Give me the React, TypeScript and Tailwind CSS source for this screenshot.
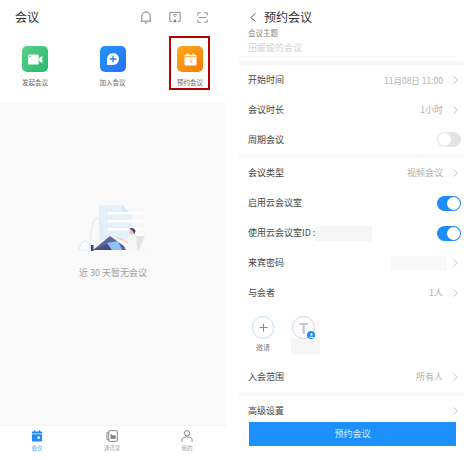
import React from "react";

const font = { fontFamily: '"Noto Sans CJK SC", "Liberation Sans", sans-serif' };

function Chevron() {
  return (
    <svg width="5" height="8" viewBox="0 0 5 8" fill="none" stroke="#b5b5b5" strokeWidth="0.8" className="shrink-0 mr-[3px]">
      <path d="M0.5 0.5 L4.4 4 L0.5 7.5" />
    </svg>
  );
}

function Toggle({ on }: { on: boolean }) {
  return (
    <div className={`w-[24px] h-[15px] rounded-full relative shrink-0 ${on ? "bg-[#1e8cfa]" : "bg-[#e4e4e4]"}`}>
      <div className={`absolute top-[1px] w-[13px] h-[13px] rounded-full bg-white ${on ? "right-[1px]" : "left-[1px]"}`} />
    </div>
  );
}

function Row({ label, h, children }: { label: React.ReactNode; h: string; children?: React.ReactNode }) {
  return (
    <div className={`flex items-center justify-between pl-[9px] pr-[3px] text-[9px] text-[#444] ${h}`}>
      <span className="flex items-center">{label}</span>
      <div className="flex items-center gap-[10px] text-[#b0b0b0]">{children}</div>
    </div>
  );
}

function Band({ h }: { h: string }) {
  return <div className={`bg-[#f8f8f8] ${h}`} />;
}

function Illustration() {
  return (
    <svg width="70" height="52" viewBox="78 203 70 52">
      <path d="M99 205 H122 L132 215 V240 H99 Z" fill="#e4f1fc" />
      <path d="M122 205 L132 215 H122 Z" fill="#d3e8f9" />
      <rect x="108" y="212" width="33" height="2.5" fill="#fff" />
      <rect x="108" y="220" width="33" height="2.5" fill="#fff" />
      <rect x="108" y="228" width="33" height="2.5" fill="#fff" />
      <path d="M79 250 C81 238 88 238 91 250" fill="none" stroke="#cfe3f6" strokeWidth="0.8" />
      <path d="M90 249 C91 222 95 216 98 218 C101 220 102 230 103 240" fill="none" stroke="#cfe3f6" strokeWidth="0.8" />
      <path d="M135 236 H145 L138 252 Z" fill="#e3e3e3" />
      <path d="M79 250 H146" stroke="#f0f0f0" strokeWidth="0.8" />
      <path d="M124 243 L131 234 L137 238 L135 250 H125 Z" fill="#f6f6f6" />
      <path d="M93 250 L110 236 L124 246 L126 250 Z" fill="#5d6699" />
      <path d="M93 250 L108 244 L122 250 Z" fill="#474f86" />
      <path d="M107 243 L118 241 L122 250 L112 250 Z" fill="#8cc3f4" />
      <path d="M117 237 L128 243" stroke="#f3c9b4" strokeWidth="1.2" />
      <circle cx="132" cy="232" r="2.6" fill="#f1c0a8" />
      <path d="M129 229 C131 227 135 228 135.5 231 L134.5 234 L132 230 Z" fill="#3b4679" />
      <rect x="91" y="245" width="2.5" height="6" fill="#3b4679" />
    </svg>
  );
}

function AppIcon({ from, to, label, children }: { from: string; to: string; label: string; children: React.ReactNode }) {
  return (
    <div className="flex flex-col items-center w-[36px]">
      <div className={`w-[26px] h-[26px] rounded-[5px] bg-gradient-to-br ${from} ${to} flex items-center justify-center`}>{children}</div>
      <span className="mt-[5px] text-[6.5px] leading-[10px] text-[#666] whitespace-nowrap">{label}</span>
    </div>
  );
}

function NavItem({ label, color, children }: { label: string; color: string; children: React.ReactNode }) {
  return (
    <div className="flex flex-col items-center w-[40px]">
      {children}
      <span className={`text-[5.5px] leading-[8px] mt-[2px] whitespace-nowrap ${color}`}>{label}</span>
    </div>
  );
}

function Left() {
  return (
    <div className="w-[226px] h-[460px] flex flex-col bg-white shrink-0">
      <div className="h-[34px] flex items-center justify-between pl-[15px] pr-[18px]">
        <span className="text-[12px] text-[#333]">会议</span>
        <div className="flex items-center gap-[16px]">
          <svg width="14" height="14" viewBox="0 0 15 15" fill="none" stroke="#777" strokeWidth="1">
            <path d="M3 11 V6.5 C3 4 5 2.2 7.5 2.2 C10 2.2 12 4 12 6.5 V11 L13 12 H2 Z" />
            <path d="M6 13.8 H9" />
            <path d="M7.5 1 V2" />
          </svg>
          <svg width="12" height="12" viewBox="0 0 14 14" fill="none" stroke="#777" strokeWidth="1">
            <path d="M4 12 H1 V1.5 H13 V12 H10" />
            <path d="M4.5 5 C6 3.8 8 3.8 9.5 5 M5.8 6.6 C6.6 6 7.4 6 8.2 6.6" />
            <path d="M5 13 L7 9 L9 13 Z" fill="#777" stroke="none" />
          </svg>
          <svg width="11" height="11" viewBox="0 0 14 14" fill="none" stroke="#777" strokeWidth="1">
            <path d="M1 4.5 V1 H5 M9 1 H13 V4.5 M13 9.5 V13 H9 M5 13 H1 V9.5 M2 7 H12" />
          </svg>
        </div>
      </div>
      <div className="h-[69px] flex justify-between items-start pl-[17px] pr-[18px] pt-[12px]">
        <AppIcon from="from-[#5cd08b]" to="to-[#1fb86a]" label="发起会议">
          <svg width="15" height="11" viewBox="0 0 16 12" fill="#fff">
            <rect x="0" y="0.5" width="11.5" height="11" rx="1" />
            <path d="M12 4.5 L15.5 2 V10 L12 7.5 Z" />
            <circle cx="2" cy="2.5" r="0.9" fill="#3fbf7c" />
          </svg>
        </AppIcon>
        <AppIcon from="from-[#2196fb]" to="to-[#2a6ffb]" label="加入会议">
          <svg width="14" height="14" viewBox="0 0 15 15">
            <path d="M7.5 1 A6.5 6.5 0 1 1 7.5 14 H1 V7.5 A6.5 6.5 0 0 1 7.5 1 Z" fill="#fff" />
            <path d="M7.5 4 V11 M4 7.5 H11" stroke="#2585fb" strokeWidth="1.4" />
          </svg>
        </AppIcon>
        <div className="relative">
          <AppIcon from="from-[#ffa81f]" to="to-[#f57c00]" label="预约会议">
            <svg width="13" height="13" viewBox="0 0 14 14">
              <rect x="0.5" y="2" width="13" height="11.5" rx="1" fill="#fff" />
              <rect x="3" y="0.5" width="1.6" height="3" fill="#fff" />
              <rect x="9.4" y="0.5" width="1.6" height="3" fill="#fff" />
              <rect x="0.5" y="3.6" width="13" height="1" fill="#fb9a17" />
              <path d="M6.5 7 L7.5 9.5 L9 10" stroke="#fb9a17" strokeWidth="0.9" fill="none" />
            </svg>
          </AppIcon>
          <div className="absolute -left-[3px] -top-[10px] w-[41px] h-[54px] border-2 border-[#b30000]" />
        </div>
      </div>
      <div className="flex-1 bg-[#f9f9f9] flex flex-col items-center pt-[100px]">
        <Illustration />
        <span className="mt-[11px] text-[9px] leading-[14px] text-[#a0a0a0]">近 30 天暂无会议</span>
      </div>
      <div className="h-[35px] border-t border-[#f3f3f3] flex justify-between items-start pl-[17px] pr-[19px] pt-[4px] bg-white">
        <NavItem label="会议" color="text-[#4aa3fb]">
          <svg width="12" height="12" viewBox="0 0 12 13">
            <rect x="0.5" y="1.5" width="11" height="11" rx="1" fill="#2489fb" />
            <rect x="2.5" y="0.3" width="1.5" height="2.5" fill="#2489fb" />
            <rect x="8" y="0.3" width="1.5" height="2.5" fill="#2489fb" />
            <rect x="0.5" y="3.8" width="11" height="0.8" fill="#fff" />
            <rect x="6.5" y="7" width="2.5" height="2.5" fill="#fff" />
          </svg>
        </NavItem>
        <NavItem label="通讯录" color="text-[#a5a5a5]">
          <svg width="12" height="12" viewBox="0 0 13 13" fill="none" stroke="#7d7d7d" strokeWidth="1">
            <rect x="3" y="0.7" width="9.3" height="11.6" rx="0.6" />
            <path d="M3 2.5 H1 V10.5 H3" />
            <path d="M5 9.5 V4 L7.5 6 H10.5 V9.5 Z" fill="#7d7d7d" stroke="none" />
          </svg>
        </NavItem>
        <NavItem label="我的" color="text-[#a5a5a5]">
          <svg width="12" height="12" viewBox="0 0 13 13" fill="none" stroke="#7d7d7d" strokeWidth="1">
            <circle cx="6.5" cy="3.6" r="2.9" />
            <path d="M1 12.8 V10.5 C1 8.6 3 7.6 6.5 7.6 C10 7.6 12 8.6 12 10.5 V12.8" />
          </svg>
        </NavItem>
      </div>
    </div>
  );
}

function Right() {
  return (
    <div className="ml-[13px] w-[225px] h-[460px] flex flex-col bg-white shrink-0">
      <div className="h-[26px] pl-[11px] pt-[8px] flex items-center gap-[8px]">
        <svg width="6" height="9" viewBox="0 0 6 9" fill="none" stroke="#444" strokeWidth="0.9">
          <path d="M5.4 0.5 L0.8 4.5 L5.4 8.5" />
        </svg>
        <span className="text-[12px] leading-[18px] text-[#333]">预约会议</span>
      </div>
      <div className="pl-[9px] pt-[1px] h-[31px] border-b border-[#f7f7f7] mr-[7px]">
        <div className="leading-[12px] h-[14px] text-[7.5px] text-[#888]">会议主题</div>
        <div className="leading-[14px] text-[#d4d4d4] text-[9px]">田媛媛的会议</div>
      </div>
      <div className="h-[4px]" />
      <Band h="h-[4px]" />
      <Row label="开始时间" h="h-[30px]">
        <span className="text-[8.5px]">11月08日 11:00</span>
        <Chevron />
      </Row>
      <Row label="会议时长" h="h-[30px]">
        <span className="text-[9px]">1小时</span>
        <Chevron />
      </Row>
      <Row label="周期会议" h="h-[29px]">
        <Toggle on={false} />
      </Row>
      <Band h="h-[4px]" />
      <Row label="会议类型" h="h-[30px]">
        <span className="text-[9px]">视频会议</span>
        <Chevron />
      </Row>
      <Row label="启用云会议室" h="h-[30px]">
        <Toggle on />
      </Row>
      <Row
        label={
          <>
            使用云会议室ID :<span className="w-[57px] h-[15px] bg-[#f6f6f6] block" />
          </>
        }
        h="h-[30px]"
      >
        <Toggle on />
      </Row>
      <Row label="来宾密码" h="h-[30px]">
        <span className="w-[56px] h-[14px] bg-[#f8f8f8] block -mr-[4px]" />
        <Chevron />
      </Row>
      <Row label="与会者" h="h-[29px]">
        <span className="text-[9px]">1人</span>
        <Chevron />
      </Row>
      <div className="h-[60px] pl-[13px] pt-[9px] flex items-start gap-[17px]">
        <div className="flex flex-col items-center w-[22px]">
          <div className="w-[22px] h-[23px] rounded-full border border-[#bfe0fb] flex items-center justify-center">
            <svg width="9" height="9" viewBox="0 0 9 9" stroke="#3d9bf8" strokeWidth="1">
              <path d="M4.5 0.5 V8.5 M0.5 4.5 H8.5" />
            </svg>
          </div>
          <span className="text-[7px] leading-[10px] mt-[3px] text-[#777] whitespace-nowrap">邀请</span>
        </div>
        <div className="flex flex-col items-start w-[29px]">
          <div className="ml-[1px] w-[23px] h-[23px] rounded-full border border-[#d5c9f3] relative flex items-center justify-center text-[14px] font-bold leading-none text-[#c9bbea]">
            T
            <div className="absolute -right-[1px] -bottom-[1px] w-[8px] h-[8px] rounded-full bg-[#1e8cfa] flex items-center justify-center">
              <svg width="5" height="5" viewBox="0 0 6 6" fill="#fff">
                <circle cx="3" cy="1.8" r="1.4" />
                <path d="M0.5 6 C0.5 3.8 5.5 3.8 5.5 6 Z" />
              </svg>
            </div>
          </div>
          <div className="w-[29px] h-[15px] bg-[#f6f6f6]" />
        </div>
      </div>
      <Row label="入会范围" h="h-[20px]">
        <span className="text-[9px]">所有人</span>
        <Chevron />
      </Row>
      <div className="h-[5px]" />
      <Band h="h-[4px]" />
      <Row label="高级设置" h="h-[30px]">
        <Chevron />
      </Row>
      <div className="relative h-0">
        <div className="absolute left-[10px] -top-[4px] w-[207px] h-[24px] bg-[#1e90fb] flex items-center justify-center text-[9px] text-[#d8ecff]">
          预约会议
        </div>
      </div>
    </div>
  );
}

export default function App() {
  return (
    <div className="w-[464px] h-[460px] overflow-hidden flex bg-white" style={font}>
      <Left />
      <Right />
    </div>
  );
}
